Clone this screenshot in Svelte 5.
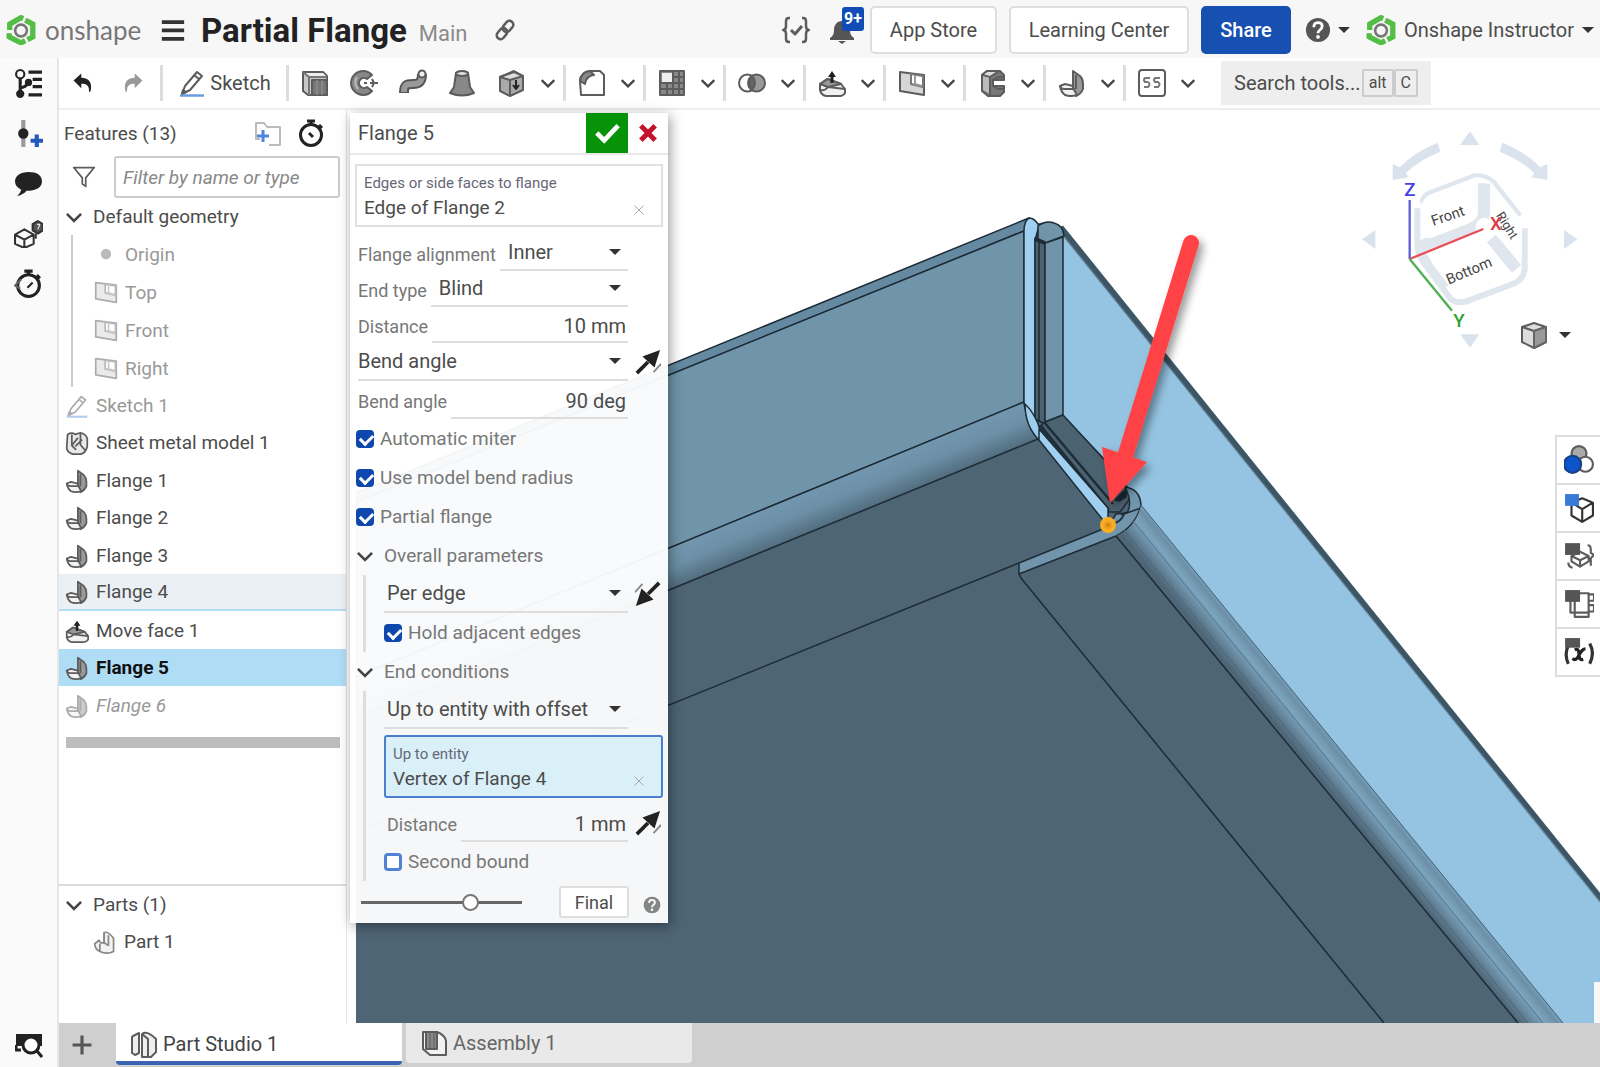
<script>
	let filter = $state('');
	let alignment = $state('Inner');
	let endType = $state('Blind');
	let distance = $state('10 mm');
	let angleType = $state('Bend angle');
	let angle = $state('90 deg');
	let mode = $state('Per edge');
	let bound = $state('Up to entity with offset');
	let offset = $state('1 mm');
	let opacity = $state(70);
	let active = $state('Flange 5');

	const solids = ['extrude', 'revolve', 'sweep', 'loft'];
	const groups = ['fillet', 'pattern', 'boolean', 'move', 'plane', 'sheet', 'flange', 'custom'];

	const planes = [
		{ name: 'Origin', icon: 'origin' },
		{ name: 'Top', icon: 'plane' },
		{ name: 'Front', icon: 'plane' },
		{ name: 'Right', icon: 'plane' }
	];

	const features = [
		{ name: 'Sketch 1', icon: 'sketch', state: 'dim' },
		{ name: 'Sheet metal model 1', icon: 'model' },
		{ name: 'Flange 1', icon: 'flange' },
		{ name: 'Flange 2', icon: 'flange' },
		{ name: 'Flange 3', icon: 'flange' },
		{ name: 'Flange 4', icon: 'flange', state: 'hover' },
		{ name: 'Move face 1', icon: 'move' },
		{ name: 'Flange 5', icon: 'flange' },
		{ name: 'Flange 6', icon: 'flange', state: 'off' }
	];

	const views = ['appearance', 'section', 'exploded', 'table', 'variables'];
</script>

{#snippet icon(name, size = 28)}
	<svg class="icon" width={size} height={size} viewBox="0 0 28 28" fill="none" stroke="#5c5c5c" stroke-width="2" stroke-linejoin="round" aria-hidden="true">
		{#if name === 'logo'}
			<g stroke="#54bd45" stroke-width="5" stroke-linejoin="miter">
				<path d="M16 3.500 14 2.500 3.500 8.500V14" />
				<path d="M3 17v3.500L14 26l4-2" />
				<path d="M18 4.800 25 8.500v12L20 23" />
			</g>
			<circle cx="14" cy="14.500" r="5.500" stroke="#777" stroke-width="2.500" fill="#f7f7f7" />
		{:else if name === 'menu'}
			<path d="M2 5.500h24M2 14.500h24M2 23.500h24" stroke="#333" stroke-width="4" />
		{:else if name === 'link'}
			<g transform="rotate(-50 14 14)" stroke-width="3">
				<rect x="1.500" y="9.500" width="14" height="9" rx="4.500" />
				<rect x="12.500" y="9.500" width="14" height="9" rx="4.500" />
			</g>
		{:else if name === 'braces'}
			<path d="M8 2H7Q4 2 4 5v5q0 4-3 4 3 0 3 4v5q0 3 3 3h1M20 2h1q3 0 3 3v5q0 4 3 4-3 0-3 4v5q0 3-3 3h-1" stroke-width="2.500" />
			<path d="m9 14 4 4 7-8" stroke-width="3" />
		{:else if name === 'bell'}
			<path d="M14 5c-5 0-8 4-8 9 0 4-1 6-4 8v2h24v-2c-3-2-4-4-4-8 0-5-3-9-8-9zM10 25h8l-4 3z" fill="#555" stroke="none" />
		{:else if name === 'help'}
			<circle cx="14" cy="14" r="13" fill="#555" stroke="none" />
			<path d="M9.500 11q0-5 4.500-5t4.500 4q0 2-2.500 4-2 1.500-2 3.500" stroke="#fff" stroke-width="3" />
			<circle cx="14" cy="21.500" r="2" fill="#fff" stroke="none" />
		{:else if name === 'undo' || name === 'redo'}
			<g transform={name === 'redo' ? 'matrix(-1 0 0 1 28 0)' : undefined} fill={name === 'redo' ? '#999' : '#222'} stroke="none">
				<path d="M3 11 12 3v5c9 0 13 6 11 15-1 2-2 2-2 0 0-6-3-8-9-8v5z" />
			</g>
		{:else if name === 'sketch'}
			<path d="m4 25 3-8L19 3l5 4-12 14zM16 6l5 4" stroke-width="2" />
			<path d="m4 25 1-4 3 2z" fill="#555" />
			<path d="M2 26.500h24" stroke="#6a9be0" stroke-width="2.500" />
		{:else if name === 'extrude'}
			<path d="M2 3h20l4 4v19H7l-5-4z" fill="#c8c8c8" />
			<path d="M3 4h19l4 4H8z" fill="#eee" stroke="none" />
			<rect x="11" y="11" width="15" height="15" fill="#777" />
			<path d="M2 3l6 5v18M8 8h18" stroke="#777" />
			<path d="M16 11v15M21 11v15" stroke="#999" stroke-width="1" />
		{:else if name === 'revolve'}
			<path d="M22 6A12 12 0 1 0 22 22l-5-4a5 5 0 1 1 0-8z" fill="#888" />
			<path d="M7 8q-4 6 1 12" stroke="#bbb" />
			<path d="M14 14h3M20 14h3M25 14h3M22 10l2 4-2 4" />
		{:else if name === 'sweep'}
			<path d="M5 24c0-9 3-9 9-9s9-2 9-10" stroke="#555" stroke-width="10" />
			<path d="M5 23c0-8 3-8 9-8s9-2 9-9" stroke="#999" stroke-width="6" />
			<circle cx="23" cy="5" r="3.500" fill="#eee" />
		{:else if name === 'loft'}
			<path d="M8 4h12l2 14 4 6q-12 5-24 0l4-6z" fill="#888" />
			<ellipse cx="14" cy="4.500" rx="6" ry="2.500" fill="#ddd" />
		{:else if name === 'hole'}
			<path d="M3 8 17 2l9 5v14l-13 6-10-5z" fill="#aaa" />
			<path d="m3 8 10 3 13-4-9-4z" fill="#ddd" />
			<path d="M13 11v16" />
			<path d="M19 11v8m-3-3 3 4 3-4" stroke="#222" />
		{:else if name === 'fillet'}
			<path d="M2 12Q3 3 12 2h10l4 4v20H3z" fill="#fff" />
			<path d="M2 12Q3 3 12 2l4 4q-8 1-9 9z" fill="#888" />
		{:else if name === 'pattern'}
			<path d="M2 2h24v24H2z" fill="#888" />
			<path d="M15 2v24M2 14h24M2 20h24M9 14v12M21 2v24M15 8h11" />
			<path d="M4 4h10v9H4z" fill="#eee" stroke="none" />
		{:else if name === 'boolean'}
			<circle cx="9.500" cy="14" r="8.500" fill="#fff" />
			<circle cx="18.500" cy="14" r="8.500" fill="#999" />
			<path d="M14 7q-6 7 0 14 6-7 0-14z" fill="#666" />
		{:else if name === 'move'}
			<path d="m2 15 7-5 14 5 4 5v4q-2 3-5 3H8q-5-1-6-6z" fill="#f2f2f2" />
			<path d="m2 15 8 3 13-3-13-5z" fill="#999" />
			<path d="M10 18q-3 4-8 3M10 18l17 2" />
			<path d="M14 14V5" stroke="#222" stroke-width="3" />
			<path d="m10 8 4-6 4 6z" fill="#222" stroke="none" />
		{:else if name === 'plane'}
			<path d="M2 3 26 6v20L2 22z" fill="#d6d6d6" />
			<path d="M13 5 25 7v11l-12-3z" fill="#fff" stroke="#777" />
			<path d="M17 6v9l7 2" stroke="#999" />
		{:else if name === 'sheet'}
			<path d="M4 6 9 2h13l4 4v5H15v6h11v6l-4 4H10l-6-5z" fill="#777" />
			<path d="M4 6 9 2h12l-9 6z" fill="#ddd" />
			<path d="M5 7l7 2v16l-7-4z" fill="#bbb" stroke="none" />
			<path d="M12 8v18M15 11l5-3h6M15 17l5 3h6" />
		{:else if name === 'flange'}
			<path d="m15 2 7 5q3 3 3 8v5q-2 5-7 7l-3-9z" fill="#999" />
			<path d="m2 17 5-2 8 2v2l4 7q-7 2-12 0-4-3-5-9z" fill="#f2f2f2" />
			<path d="M2 17q1 3 4 3h10M18 6v14" />
		{:else if name === 'custom'}
			<rect x="1" y="1" width="26" height="26" rx="3" fill="#fff" />
			<path d="M12 9H7q-2 2 0 4h3q3 2 0 5H6M22 9h-5q-2 2 0 4h3q3 2 0 5h-4" stroke="#777" />
		{:else if name === 'model'}
			<path d="M3 4Q8 1 12 4l6-2q7 2 8 7v9q-2 8-8 9H9q-7-2-7-8z" fill="#e8e8e8" />
			<path d="M8 4v13l5 5M18 3v13l6 7M8 17l7-9M12 18l8-8" />
		{:else if name === 'origin'}
			<circle cx="14" cy="14" r="6" fill="#777" stroke="none" />
		{:else if name === 'part'}
			<path d="M13 3q5-2 11 7v15q-8 4-16 0-6-3-6-9l5-4 2 3h4z" fill="#f2f2f2" stroke="#888" />
			<path d="M13 3v12l5 3V6M8 16v9" stroke="#888" />
		{:else if name === 'tree'}
			<g stroke="#222">
				<circle cx="6" cy="5" r="4" />
				<path d="M6 9v14M6 18q5 0 8-5" stroke-width="3" />
				<circle cx="6" cy="24" r="3" fill="#222" />
				<circle cx="14" cy="13" r="2.500" fill="#222" />
				<path d="M14 3h13M18 10h9M18 17h9M14 25h13" stroke-width="3" />
			</g>
		{:else if name === 'insert'}
			<path d="M9 1v26" stroke="#999" stroke-width="4" />
			<circle cx="9" cy="14" r="5" fill="#222" stroke="none" />
			<path d="M22 15v12M16 21h12" stroke="#2458bd" stroke-width="4" />
		{:else if name === 'comment'}
			<path d="M14 3C6 3 1 7 1 12q0 5 6 8-1 4-4 6 6-1 9-5c9 0 15-3 15-9S22 3 14 3z" fill="#222" stroke="none" />
		{:else if name === 'blocks'}
			<g stroke="#333">
				<path d="m1 15 9-5 9 5v9l-9 4-9-4zM1 15l9 5 9-5M10 20v8" />
				<path d="m18 5 5-3 5 3v6l-5 3-5-3z" fill="#555" />
				<path d="M21 14v5" />
				<path d="M22 5h3l-2 5" stroke="#fff" stroke-width="1" />
			</g>
		{:else if name === 'timer' || name === 'history'}
			<g stroke="#222" stroke-width="3">
				<circle cx="14" cy="16" r="10.500" />
				<path d="M10 2h8M14 2v4M22 6l3 3" />
				{#if name === 'history'}
					<path d="m13 18 5-5" stroke-width="2" />
					<path d="M7 10 1 16l5 3" stroke-width="2" stroke="#666" />
				{:else}
					<path d="m12 14 4 4" />
				{/if}
			</g>
		{:else if name === 'folder'}
			<path d="M6 20H2V4h8l3 4h13v18H15" stroke="#bbb" />
			<path d="M9 11v12M3 17h12" stroke="#4c87d8" stroke-width="3" />
		{:else if name === 'funnel'}
			<path d="M2 3h24L16 15v10l-4-3v-7z" />
		{:else if name === 'search'}
			<path d="M1 3h26v12H1z" fill="#222" stroke="none" />
			<circle cx="16" cy="14" r="8" fill="#fff" stroke="#222" stroke-width="3" />
			<path d="m22 20 5 6M1 14v5h5" stroke="#222" stroke-width="3" />
		{:else if name === 'appearance'}
			<circle cx="14" cy="8" r="7" fill="#aaa" />
			<circle cx="20" cy="18" r="7" fill="#fff" />
			<circle cx="8" cy="18" r="8" fill="#0d55cb" stroke="#174087" />
		{:else if name === 'section'}
			<path d="m7 9 10-4 10 4v12l-10 6-10-6zM7 9l10 6 10-6M17 15v12" stroke="#333" />
			<path d="M1 1h13v11H1z" fill="#377bd5" stroke="none" />
		{:else if name === 'exploded'}
			<path d="m7 14 8-4 8 4v5l-8 5-8-5zM7 14l8 4 8-4M15 18v6M22 4q3 0 3 4v3l3 2-3 3v7M4 20q0 4 4 5" />
			<path d="M1 2h14v11H1z" fill="#555" stroke="none" />
		{:else if name === 'table'}
			<path d="M6 8v14h17V4H10v22h13v-4M23 5h5v6h-5M23 15h5v6h-5" />
			<path d="M1 1h14v11H1z" fill="#555" stroke="none" />
		{:else if name === 'variables'}
			<path d="M4 8q-4 8 0 17M24 6q5 9 0 19" stroke="#333" stroke-width="3" />
			<path d="M10 12q4-2 4 4t4 5M20 11q-3 0-6 6t-6 3" stroke="#222" stroke-width="3" />
			<path d="M1 1h14v9H1z" fill="#555" stroke="none" />
		{:else if name === 'studio'}
			<path d="M3 6 9 3v20l-4 2-3-2V7zM12 4q5-4 14 5v13l-5 5h-9zM12 4l6 5v18" fill="#eee" />
		{:else if name === 'assembly'}
			<path d="M3 3h14q8 3 9 9v14H10l-7-6z" fill="#f3f3f3" />
			<path d="M6 3h11v17H6z" fill="#888" />
			<path d="M10 3v17M14 3v17" stroke-width="1" />
		{:else if name === 'flip' || name === 'unflip'}
			<g transform={name === 'unflip' ? 'rotate(180 14 14)' : undefined}>
				<path d="M2 26 14 14" stroke="#222" stroke-width="4" />
				<path d="M27 1 21 20 8 8z" fill="#222" stroke="none" />
				<path d="m20 25 8-9" stroke="#888" />
			</g>
		{:else if name === 'cube'}
			<path d="m2 6 12-4 12 4v15l-12 6-12-6z" fill="#ddd" />
			<path d="m2 6 12 4 12-4M14 10v17" />
			<path d="m14 10 12-4v15l-12 6z" fill="#999" stroke="#666" />
		{:else if name === 'tick'}
			<path d="m3 14 8 8L26 6" stroke="#fff" stroke-width="5" stroke-linejoin="miter" />
		{:else if name === 'cross'}
			<path d="m4 4 20 20M24 4 4 24" stroke="#c2142c" stroke-width="7" />
		{:else if name === 'clear'}
			<path d="m5 5 18 18M23 5 5 23" stroke="#aaa" />
		{:else if name === 'plus'}
			<path d="M14 2v24M2 14h24" stroke="#555" stroke-width="4" />
		{:else if name === 'chevron'}
			<path d="m3 9 11 11L25 9" stroke="#444" stroke-width="4" stroke-linejoin="miter" />
		{/if}
	</svg>
{/snippet}

{#snippet pick(id, label, value, options)}
	<span class="pick">
		<select {id} aria-label={label} {value}>
			{#each options as option}<option>{option}</option>{/each}
		</select>
	</span>
{/snippet}

<div class="app">
	<header>
		<a class="brand" href="#home">{@render icon('logo', 30)}<span>onshape</span></a>
		<button class="plain" aria-label="Menu">{@render icon('menu', 26)}</button>
		<h1>Partial Flange</h1>
		<span class="branch">Main</span>
		<button class="plain link" aria-label="Copy link">{@render icon('link', 24)}</button>
		<div class="account">
			<button class="plain" aria-label="Checks">{@render icon('braces', 28)}</button>
			<button class="plain bell" aria-label="Notifications">{@render icon('bell', 28)}<span class="badge">9+</span></button>
			<button class="boxed store">App Store</button>
			<button class="boxed learn">Learning Center</button>
			<button class="boxed share">Share</button>
			<button class="plain help" aria-label="Help">{@render icon('help', 26)}<i class="caret"></i></button>
			<button class="plain user">{@render icon('logo', 30)}<span>Onshape Instructor</span><i class="caret"></i></button>
		</div>
	</header>

	<nav class="rail" aria-label="Side panels">
		{#each ['tree', 'insert', 'comment', 'blocks', 'history'] as name}
			<button class="plain" aria-label={name}>{@render icon(name, 29)}</button>
		{/each}
		<button class="plain last" aria-label="Tab manager">{@render icon('search', 28)}</button>
	</nav>

	<div class="toolbar">
		<button class="plain" aria-label="Undo">{@render icon('undo', 24)}</button>
		<button class="plain redo" aria-label="Redo">{@render icon('redo', 24)}</button>
		<button class="plain draw">{@render icon('sketch', 28)}<span>Sketch</span></button>
		<div class="solids">
			{#each solids as name}
				<button class="plain" aria-label={name}>{@render icon(name)}</button>
			{/each}
			<button class="plain wide" aria-label="hole">{@render icon('hole')}{@render icon('chevron', 16)}</button>
		</div>
		{#each groups as name}
			<button class="plain group" aria-label={name}>{@render icon(name)}{@render icon('chevron', 16)}</button>
		{/each}
		<button class="search">Search tools... <kbd>alt</kbd><kbd>C</kbd></button>
	</div>

	<aside>
		<div class="head">
			<h2>Features (13)</h2>
			<button class="plain" aria-label="Add folder">{@render icon('folder', 28)}</button>
			<button class="plain" aria-label="Regeneration time">{@render icon('timer', 28)}</button>
		</div>
		<div class="filter">
			{@render icon('funnel', 24)}
			<input type="text" aria-label="Filter" placeholder="Filter by name or type" bind:value={filter} />
		</div>
		<div class="row top">{@render icon('chevron', 18)}<span>Default geometry</span></div>
		<ul class="planes">
			{#each planes as plane}
				<li class="row dim">{@render icon(plane.icon, 24)}<span>{plane.name}</span></li>
			{/each}
		</ul>
		<ul class="features">
			{#each features as feature}
				<li>
					<button class="row {feature.state ?? ''}" class:active={feature.name === active} onclick={() => (active = feature.name)}>
						{@render icon(feature.icon, 24)}<span>{feature.name}</span>
					</button>
				</li>
			{/each}
		</ul>
		<div class="rollback"></div>
		<div class="parts">
			<div class="row top">{@render icon('chevron', 18)}<span>Parts (1)</span></div>
			<div class="row part">{@render icon('part', 24)}<span>Part 1</span></div>
		</div>
	</aside>

	<main>
		<svg class="model" viewBox="355 110 1245 913" preserveAspectRatio="xMinYMin slice" role="img" aria-label="Sheet metal part">
			<defs>
				<linearGradient id="bend" gradientUnits="userSpaceOnUse" x1="830" y1="483" x2="846" y2="522">
					<stop offset="0" stop-color="#7196ad" />
					<stop offset=".4" stop-color="#6c90a7" />
					<stop offset="1" stop-color="#4d6575" />
				</linearGradient>
				<linearGradient id="side" gradientUnits="userSpaceOnUse" x1="1300" y1="755" x2="1332" y2="729">
					<stop offset="0" stop-color="#4e6677" />
					<stop offset=".5" stop-color="#7ca4be" />
					<stop offset=".72" stop-color="#6c8fa6" />
					<stop offset="1" stop-color="#8bb7d4" />
				</linearGradient>
				<filter id="drop" x="-30%" y="-10%" width="170%" height="130%">
					<feDropShadow dx="4" dy="5" stdDeviation="4" flood-opacity=".4" />
				</filter>
			</defs>
			<g stroke="#1d2c36" stroke-width="1.500" stroke-linejoin="round">
				<path d="M355 493 1023 220l5-2 9 5 11-1 12 4 8 9 532 663v140H355z" fill="#4e6575" stroke="none" />
				<path d="M355 493 1023 220l5-2-5 13L355 502z" fill="#6489a1" />
				<path d="M355 502 1023 231v171L355 677z" fill="#7094aa" />
				<path d="M355 677 1023 402q3 22 14 37L355 718z" fill="url(#bend)" />
				<path d="M1062 236 1600 904v119h-38L1140 505l-28-38-50-52z" fill="#95c4e2" stroke="none" />
				<path d="M1060 227 1600 898" stroke="#3d5666" stroke-width="5" />
				<path d="M1062 236 1600 903" fill="none" stroke="#6e95ae" stroke-width="1" />
				<!-- corner relief -->
				<path d="M1023 231q0-10 5-13 6 0 10 8l-4 14v185l-1-4q-10-10-10-19z" fill="#a0d0f1" />
				<path d="M1034 238h10v186l-10-5z" fill="#4b6271" />
				<path d="M1038 240v182" />
				<path d="M1044 243 1062 237v178l-18 7z" fill="#7094aa" />
				<path d="M1037 226q8-6 16-3 9 2 10 13l-19 7-7-4z" fill="#7094aa" />
				<path d="M1034 239 1044 243" stroke-width="4" />
				<path d="M1024 404q10 9 16 28l-2 8q-14-14-14-36z" fill="#9dcded" />
				<path d="M1038 427 1044 422 1062 415 1110 467 1126 487 1130 497 1119 512 1108 512z" fill="#4b6271" />
				<path d="M1043 422 1112 504M1040 426 1108 510" stroke-width="2.500" />
				<path d="M1038 429 1107 508v14l-5-2-64-80z" fill="#a0d0f1" />
				<path d="M1124 487q15 2 16 18-5 21-25 31l-97 38v-11l89-36 8-13 11-1q6-10-2-26z" fill="#7095ac" />
				<path d="M1107 525q14-2 17-13M1120 515l20-7" fill="none" />
				<path d="M1114 500 1125 490v7l-7 4z" fill="#1d2c36" />
				<path d="M1115 536q20-8 25-31L1562 1023h-45z" fill="url(#side)" stroke="none" />
				<path d="M1115 536 1517 1023" />
				<path d="M1123 530 1527 1023" stroke="#4c6779" stroke-width="1" />
				<path d="M1132 521 1542 1023" stroke="#54758b" stroke-width="1" />
				<path d="M1140 505 1562 1023" stroke="#476578" stroke-width="1" />
				<path d="M355 832 1018 563M1018 574 1020 578 1383 1023" fill="none" />
			</g>
			<path d="M1593 982h7v41h-7z" fill="#f8f8f8" />
			<circle cx="1107" cy="525" r="6" fill="#ec9f16" stroke="#f9ac25" stroke-width="4" />
			<circle cx="1107" cy="525" r="2" fill="#c98918" />
			<g filter="url(#drop)">
				<path d="M1190 243 1123 460" stroke="#ff4344" stroke-width="16" stroke-linecap="round" />
				<path d="M1101 447 1146 462 1109 503z" fill="#ff4344" />
			</g>
		</svg>

		<svg class="viewcube" viewBox="0 0 780 720" role="img" aria-label="View cube">
			<g fill="#dae3ed">
				<path d="M360 75 390 34 418 75zM360 643h58l-28 40zM66 358l40-28v57zM712 358l-40-28v57z" />
				<path d="M158 132v48l48-8-9-12q40-40 104-65l-8-27q-70 28-114 74zM622 132v48l-48-8 9-12q-40-40-104-65l8-27q70 28 114 74z" />
			</g>
			<g fill="none" stroke="#dfe6ee" stroke-width="18" stroke-linejoin="round">
				<path d="M232 265v105q0 35 22 62l78 105q18 14 45 8l134-50q38-12 43-45V325" />
				<path d="M246 250q0-25 25-33l130-50q35-5 60 18l80 102" stroke-width="13" />
				<path d="M432 190v90q-4 30-30 42M240 380l160-62M454 356l76 91" stroke-width="36" />
				<path d="M245 393l75 107" stroke-width="14" />
			</g>
			<g fill="#fff">
				<path d="M245 260q3-27 28-37l103-36q28-8 34 18v70q0 25-30 38l-106 41q-29 4-29-24z" />
				<path d="M272 415q1-15 20-22l118-31q24-4 40 15l48 66q12 25-13 39l-90 41q-35 12-57-12l-60-78q-6-8-6-18z" />
				<path d="M453 215q4-19 16-6l70 84q7 10 7 20v100q-3 16-14 5l-72-84q-8-10-8-20z" />
				<path d="M400 175q24-9 48 15-24 3-48-15zM503 488q14-38 42-53-1 33-42 53z" />
				<circle cx="434" cy="320" r="27" />
			</g>
			<g class="faces">
				<text x="280" y="318" transform="rotate(-19 280 318)">Front</text>
				<text x="326" y="494" transform="rotate(-23 326 494)">Bottom</text>
				<text class="right" x="467" y="286" transform="rotate(58 467 286)">Right</text>
			</g>
			<g fill="none" stroke-width="7">
				<path d="M209 417V240" stroke="#625edb" />
				<path d="M209 417 430 327" stroke="#e45058" />
				<path d="M209 417 336 572" stroke="#4db052" />
			</g>
			<g class="axes">
				<text x="193" y="229" fill="#4540e6">Z</text>
				<text x="450" y="331" fill="#e03b45">X</text>
				<text x="340" y="620" fill="#2da432">Y</text>
			</g>
		</svg>
		<button class="plain shading" aria-label="View options">{@render icon('cube', 28)}<i class="caret"></i></button>

		<div class="views">
			{#each views as view}
				<button class="plain" aria-label={view}>{@render icon(view, 30)}</button>
			{/each}
		</div>

		<form class="dialog" onsubmit={(e) => e.preventDefault()}>
			<div class="title">
				<h2>Flange 5</h2>
				<button class="accept" aria-label="Accept">{@render icon('tick', 26)}</button>
				<button class="plain cancel" aria-label="Cancel">{@render icon('cross', 20)}</button>
			</div>
			<div class="body">
				<div class="entity">
					<small>Edges or side faces to flange</small>
					<span>Edge of Flange 2</span>
					<button class="plain" aria-label="Remove edge">{@render icon('clear', 14)}</button>
				</div>
				<div class="field short"><label for="align">Flange alignment</label>{@render pick('align', undefined, alignment, ['Inner', 'Outer', 'Middle'])}</div>
				<div class="field short"><label for="end">End type</label>{@render pick('end', undefined, endType, ['Blind', 'Up to entity'])}</div>
				<div class="field short"><label for="dist">Distance</label><input id="dist" type="text" bind:value={distance} /></div>
				<div class="field full">{@render pick('angletype', 'Angle control', angleType, ['Bend angle', 'Align to geometry'])}<button class="plain flip" aria-label="Flip direction">{@render icon('flip', 26)}</button></div>
				<div class="field"><label for="angle">Bend angle</label><input id="angle" type="text" bind:value={angle} /></div>
				<label class="check"><input type="checkbox" checked />Automatic miter</label>
				<label class="check"><input type="checkbox" checked />Use model bend radius</label>
				<label class="check"><input type="checkbox" checked />Partial flange</label>
				<div class="section">{@render icon('chevron', 18)}<span>Overall parameters</span></div>
				<div class="nested">
					<div class="field full">{@render pick('mode', 'Parameter mode', mode, ['Per edge', 'Per chain'])}<button class="plain flip" aria-label="Opposite side">{@render icon('unflip', 26)}</button></div>
					<label class="check"><input type="checkbox" checked />Hold adjacent edges</label>
				</div>
				<div class="section">{@render icon('chevron', 18)}<span>End conditions</span></div>
				<div class="nested">
					<div class="field full">{@render pick('bound', 'Bound type', bound, ['Up to entity with offset', 'Blind'])}</div>
					<div class="entity selected">
						<small>Up to entity</small>
						<span>Vertex of Flange 4</span>
						<button class="plain" aria-label="Remove vertex">{@render icon('clear', 14)}</button>
					</div>
					<div class="field"><label for="offset">Distance</label><input id="offset" type="text" bind:value={offset} /><button class="plain flip" aria-label="Flip offset">{@render icon('flip', 26)}</button></div>
					<label class="check"><input type="checkbox" />Second bound</label>
				</div>
				<div class="foot">
					<input type="range" aria-label="Preview opacity" bind:value={opacity} />
					<button class="final">Final</button>
					<button class="plain info" aria-label="Help">{@render icon('help', 18)}</button>
				</div>
			</div>
		</form>
	</main>

	<footer>
		<button class="plain add" aria-label="New tab">{@render icon('plus', 22)}</button>
		<button class="tab current">{@render icon('studio', 28)}<span>Part Studio 1</span></button>
		<button class="tab">{@render icon('assembly', 28)}<span>Assembly 1</span></button>
	</footer>
</div>

<style>
	:global(body) {
		background: #fff;
	}

	.app {
		display: grid;
		grid-template: 58px 52px 1fr 44px / 59px 290px 1fr;
		grid-template-areas:
			'header header header'
			'rail toolbar toolbar'
			'rail list canvas'
			'rail tabs tabs';
		height: 100vh;
		overflow: hidden;
		font-family: Roboto, 'Liberation Sans', sans-serif;
		font-size: 20px;
		color: #4c4c4c;
	}

	.app * {
		box-sizing: border-box;
	}

	h1,
	h2,
	ul {
		margin: 0;
		padding: 0;
		font-weight: 400;
	}

	button,
	input,
	select {
		font: inherit;
		color: inherit;
	}

	.icon {
		display: block;
		flex: none;
	}

	.plain {
		display: flex;
		align-items: center;
		justify-content: center;
		padding: 0;
		border: 0;
		background: none;
	}

	.caret {
		border: 6px solid transparent;
		border-top-color: #333;
		border-bottom: 0;
	}

	header {
		grid-area: header;
		display: flex;
		align-items: center;
		padding: 2px 6px 0;
		background: #f7f7f7;
	}

	.brand {
		display: flex;
		align-items: center;
		gap: 9px;
		width: 154px;
		font: 26px Lato, sans-serif;
		color: #777;
		text-decoration: none;
	}

	h1 {
		margin-left: 15px;
		font-size: 33px;
		font-weight: 700;
		color: #222;
	}

	.branch {
		margin: 6px 0 0 12px;
		font-size: 22px;
		color: #8a8a8a;
	}

	.link {
		margin-left: 25px;
	}

	.account {
		display: flex;
		align-items: center;
		margin-left: auto;
	}

	.bell {
		position: relative;
		margin: 0 14px 0 18px;
	}

	.badge {
		position: absolute;
		top: -9px;
		left: 14px;
		padding: 0 2px;
		border-radius: 3px;
		background: #114db5;
		color: #fff;
		font-size: 16px;
		font-weight: 700;
		line-height: 24px;
	}

	.boxed {
		height: 48px;
		padding: 0;
		border: 2px solid #dedede;
		border-radius: 5px;
		background: #fff;
		white-space: nowrap;
	}

	.store {
		width: 127px;
	}

	.learn {
		width: 180px;
		margin: 0 12px;
	}

	.share {
		width: 90px;
		border-color: #1750b0;
		background: #1750b0;
		color: #fff;
		font-weight: 500;
	}

	.help {
		gap: 7px;
		margin: 0 16px 0 14px;
	}

	.user {
		gap: 8px;
		white-space: nowrap;
	}

	.rail {
		grid-area: rail;
		display: flex;
		flex-direction: column;
		border-right: 2px solid #e6e6e6;
		background: #fafafa;
	}

	.rail .plain {
		height: 50px;
	}

	.rail .last {
		height: 44px;
		margin-top: auto;
	}

	.toolbar {
		grid-area: toolbar;
		display: flex;
		align-items: center;
		padding-left: 12px;
		border-bottom: 2px solid #eee;
	}

	.redo {
		margin: 0 15px 0 26px;
	}

	.draw,
	.solids,
	.group {
		height: 36px;
		border-left: 3px solid #ddd;
	}

	.draw {
		gap: 4px;
		width: 126px;
	}

	.solids {
		display: flex;
		justify-content: space-between;
		width: 277px;
		padding: 0 7px 0 12px;
	}

	.wide {
		gap: 15px;
	}

	.group {
		gap: 14px;
		width: 80px;
		padding-left: 12px;
		justify-content: flex-start;
	}

	.search {
		display: flex;
		align-items: center;
		height: 44px;
		width: 210px;
		margin-left: 18px;
		padding: 0 13px;
		border: 0;
		background: #eee;
		white-space: nowrap;
	}

	kbd {
		padding: 0 5px;
		border: 2px solid #ccc;
		border-radius: 2px;
		font: 16px/24px Roboto, sans-serif;
	}

	kbd:first-of-type {
		margin-left: auto;
	}

	aside {
		grid-area: list;
		display: flex;
		flex-direction: column;
		width: 288px;
		border-right: 1px solid #e4e4e4;
		font-size: 19px;
	}

	.head,
	.filter {
		display: flex;
		align-items: center;
		height: 46px;
		padding: 0 21px 0 5px;
	}

	.head h2 {
		flex: 1;
		font-size: 19px;
	}

	.head .plain {
		margin-left: 15px;
	}

	.filter {
		gap: 18px;
		height: 42px;
		padding: 0 6px 0 13px;
	}

	.filter input {
		flex: 1;
		min-width: 0;
		height: 42px;
		padding: 0 7px;
		border: 2px solid #ccc;
		border-radius: 3px;
		font-style: italic;
	}

	.filter input::placeholder {
		color: #888;
	}

	.row {
		display: flex;
		align-items: center;
		gap: 7px;
		width: 100%;
		height: 37px;
		padding: 0 6px;
		border: 0;
		background: none;
	}

	li {
		list-style: none;
	}

	.top {
		gap: 10px;
	}

	.planes {
		margin-left: 12px;
		border-left: 2px solid #ccc;
	}

	.planes .row {
		height: 38px;
		padding-left: 21px;
	}

	.dim {
		color: #999;
	}

	.dim .icon,
	.off .icon {
		opacity: 0.5;
	}

	.features li:nth-child(even) {
		padding-bottom: 1px;
	}

	.row.hover {
		border-bottom: 2px solid #b3def4;
		background: #ebf0f4;
	}

	.row.active {
		background: #b0ddf6;
		color: #111;
		font-weight: 700;
	}

	.row.off {
		color: #999;
		font-style: italic;
	}

	.rollback {
		height: 11px;
		margin: 13px 6px 0 7px;
		background: #bdbdbd;
	}

	.parts {
		margin-top: auto;
		height: 139px;
		border-top: 2px solid #ddd;
	}

	.part {
		padding-left: 34px;
	}

	main {
		grid-area: canvas;
		position: relative;
		min-width: 0;
		padding-left: 7px;
	}

	.model {
		display: block;
		width: 100%;
		height: 100%;
	}

	.viewcube {
		position: absolute;
		top: 10px;
		right: 0;
		width: 260px;
		height: 240px;
	}

	.faces {
		font-size: 44px;
		fill: #444;
	}

	.faces .right {
		font-size: 38px;
	}

	.axes {
		font-size: 56px;
		font-weight: 500;
	}

	.shading {
		position: absolute;
		top: 211px;
		right: 29px;
		gap: 11px;
	}

	.views {
		position: absolute;
		top: 325px;
		right: 0;
		width: 45px;
		border: 2px solid #ddd;
		border-width: 2px 0 0 2px;
		background: #fff;
	}

	.views .plain {
		width: 100%;
		height: 48px;
		border-bottom: 2px solid #ddd;
	}

	.dialog {
		position: absolute;
		top: 3px;
		left: 1px;
		width: 318px;
		box-shadow: 2px 3px 12px #0006;
	}

	.title {
		display: flex;
		align-items: center;
		height: 42px;
		padding-left: 8px;
		border-bottom: 2px solid #e8e8e8;
		background: #fff;
	}

	.title h2 {
		flex: 1;
		font-size: 20px;
	}

	.accept {
		display: flex;
		align-items: center;
		justify-content: center;
		width: 42px;
		height: 40px;
		padding: 0;
		border: 0;
		background: #079307;
	}

	.cancel {
		width: 40px;
	}

	.body {
		padding: 9px 5px 0 8px;
		background: #fffffff2;
	}

	.entity {
		position: relative;
		display: flex;
		flex-direction: column;
		justify-content: center;
		gap: 2px;
		height: 63px;
		margin: 0 0 8px -3px;
		padding-left: 7px;
		border: 2px solid #e0e0e0;
		background: #fff;
		font-size: 19px;
		line-height: 24px;
	}

	.entity small {
		font-size: 15px;
		line-height: 22px;
		color: #667;
	}

	.entity .plain {
		position: absolute;
		right: 15px;
		bottom: 8px;
	}

	.selected {
		margin: 6px 0 6px 0;
		border-color: #4a7fd0;
		border-radius: 3px;
		background: #d9f0f9;
	}

	.field {
		position: relative;
		display: flex;
		align-items: center;
		height: 38px;
		margin-right: 35px;
	}

	.short {
		height: 36px;
	}

	.field label {
		margin-right: 4px;
		padding-top: 3px;
		font-size: 18px;
		color: #777;
	}

	.pick,
	.field input {
		flex: 1;
		min-width: 0;
		height: 100%;
		border: 0;
		border-bottom: 2px solid #ddd;
		background: none;
	}

	.field input {
		padding: 4px 2px 0;
		text-align: right;
	}

	.pick {
		display: flex;
		align-items: center;
	}

	.pick::after {
		content: '';
		margin: 0 7px 0 -19px;
		border: 6px solid transparent;
		border-top-color: #333;
		border-bottom: 0;
	}

	select {
		flex: 1;
		min-width: 0;
		height: 100%;
		padding: 0 0 0 8px;
		border: 0;
		background: none;
		appearance: none;
	}

	.full select {
		padding-left: 0;
	}

	.flip {
		position: absolute;
		right: -33px;
	}

	.check,
	.section {
		display: flex;
		align-items: center;
		gap: 6px;
		height: 39px;
		font-size: 19px;
		color: #777;
	}

	.check input {
		position: relative;
		width: 18px;
		height: 18px;
		margin: 0 0 0 -2px;
		border: 3px solid #5280d2;
		border-radius: 4px;
		background: #fff;
		appearance: none;
	}

	.check input:checked {
		border-color: #0e48ae;
		background: #0e48ae;
	}

	.check input:checked::after {
		content: '';
		position: absolute;
		top: 1px;
		left: 1px;
		width: 10px;
		height: 6px;
		border: solid #fff;
		border-width: 0 0 3px 3px;
		transform: rotate(-45deg);
	}

	.section {
		gap: 10px;
		margin-left: -2px;
	}

	.nested {
		margin-left: 5px;
		padding-left: 18px;
		border-left: 3px solid #ddd;
	}

	.nested .full select {
		padding-left: 3px;
	}

	.nested .check input {
		margin-left: 0;
	}

	.nested .field label {
		margin-left: 3px;
	}

	.foot {
		display: flex;
		align-items: center;
		height: 42px;
	}

	input[type='range'] {
		width: 161px;
		height: 20px;
		margin: 0 0 0 3px;
		background: linear-gradient(#666, #666) center / 100% 3px no-repeat;
		appearance: none;
	}

	input[type='range']::-webkit-slider-thumb {
		width: 17px;
		height: 17px;
		border: 2px solid #777;
		border-radius: 50%;
		background: #fff;
		appearance: none;
	}

	.final {
		width: 70px;
		height: 32px;
		margin-left: 37px;
		padding: 0;
		border: 2px solid #ddd;
		border-radius: 3px;
		background: #fff;
		font-size: 18px;
	}

	.info {
		margin: 6px 0 0 14px;
		opacity: 0.7;
	}

	footer {
		grid-area: tabs;
		display: flex;
		background: #cfcfcf;
	}

	.add {
		width: 57px;
		padding-right: 12px;
	}

	.tab {
		display: flex;
		align-items: center;
		gap: 5px;
		width: 286px;
		height: 40px;
		margin-right: 4px;
		padding: 0 14px;
		border: 0;
		border-radius: 0 0 4px 4px;
		background: #e9e9e9;
		color: #666;
	}

	.current {
		height: 42px;
		padding-top: 4px;
		border-bottom: 4px solid #3a62b5;
		background: #fff;
		color: #444;
	}
</style>
